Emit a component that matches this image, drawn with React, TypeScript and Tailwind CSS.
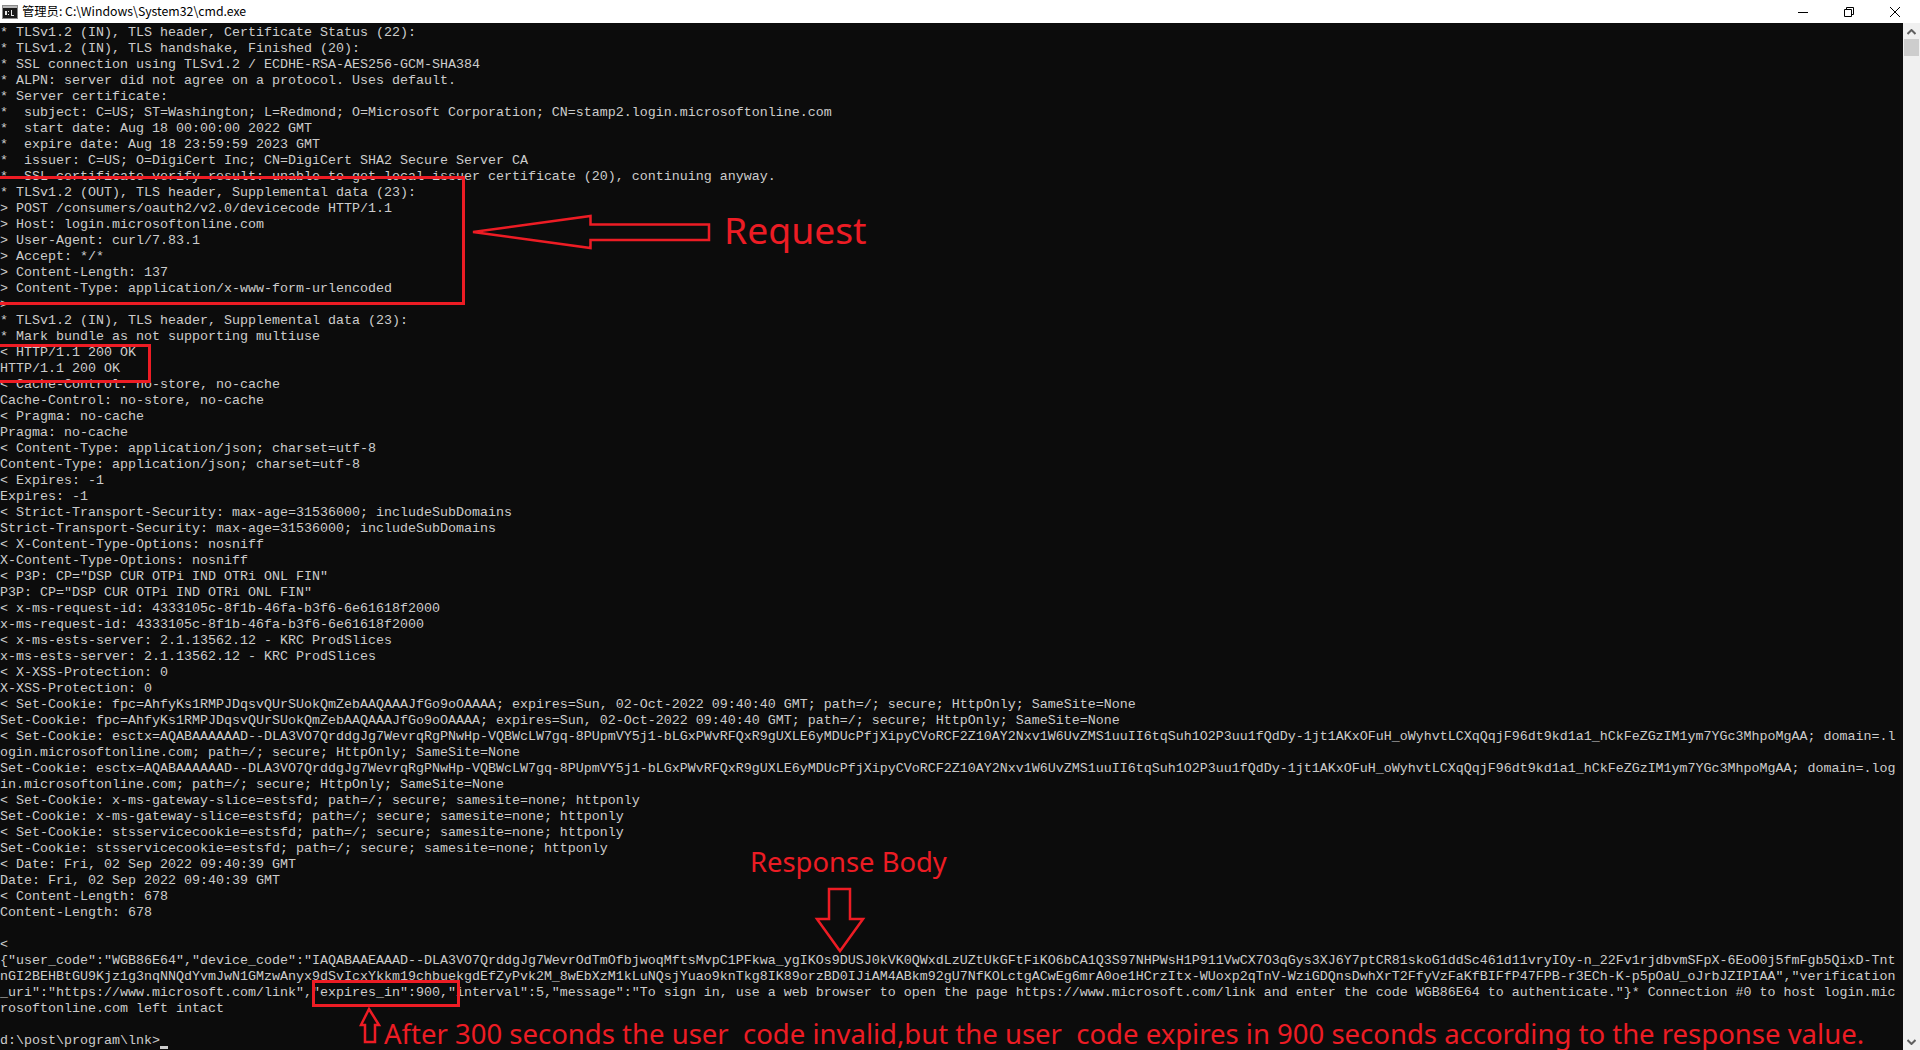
const lines: string[] = [
  '* TLSv1.2 (IN), TLS header, Certificate Status (22):',
  '* TLSv1.2 (IN), TLS handshake, Finished (20):',
  '* SSL connection using TLSv1.2 / ECDHE-RSA-AES256-GCM-SHA384',
  '* ALPN: server did not agree on a protocol. Uses default.',
  '* Server certificate:',
  '*  subject: C=US; ST=Washington; L=Redmond; O=Microsoft Corporation; CN=stamp2.login.microsoftonline.com',
  '*  start date: Aug 18 00:00:00 2022 GMT',
  '*  expire date: Aug 18 23:59:59 2023 GMT',
  '*  issuer: C=US; O=DigiCert Inc; CN=DigiCert SHA2 Secure Server CA',
  '*  SSL certificate verify result: unable to get local issuer certificate (20), continuing anyway.',
  '* TLSv1.2 (OUT), TLS header, Supplemental data (23):',
  '> POST /consumers/oauth2/v2.0/devicecode HTTP/1.1',
  '> Host: login.microsoftonline.com',
  '> User-Agent: curl/7.83.1',
  '> Accept: */*',
  '> Content-Length: 137',
  '> Content-Type: application/x-www-form-urlencoded',
  '>',
  '* TLSv1.2 (IN), TLS header, Supplemental data (23):',
  '* Mark bundle as not supporting multiuse',
  '< HTTP/1.1 200 OK',
  'HTTP/1.1 200 OK',
  '< Cache-Control: no-store, no-cache',
  'Cache-Control: no-store, no-cache',
  '< Pragma: no-cache',
  'Pragma: no-cache',
  '< Content-Type: application/json; charset=utf-8',
  'Content-Type: application/json; charset=utf-8',
  '< Expires: -1',
  'Expires: -1',
  '< Strict-Transport-Security: max-age=31536000; includeSubDomains',
  'Strict-Transport-Security: max-age=31536000; includeSubDomains',
  '< X-Content-Type-Options: nosniff',
  'X-Content-Type-Options: nosniff',
  '< P3P: CP="DSP CUR OTPi IND OTRi ONL FIN"',
  'P3P: CP="DSP CUR OTPi IND OTRi ONL FIN"',
  '< x-ms-request-id: 4333105c-8f1b-46fa-b3f6-6e61618f2000',
  'x-ms-request-id: 4333105c-8f1b-46fa-b3f6-6e61618f2000',
  '< x-ms-ests-server: 2.1.13562.12 - KRC ProdSlices',
  'x-ms-ests-server: 2.1.13562.12 - KRC ProdSlices',
  '< X-XSS-Protection: 0',
  'X-XSS-Protection: 0',
  '< Set-Cookie: fpc=AhfyKs1RMPJDqsvQUrSUokQmZebAAQAAAJfGo9oOAAAA; expires=Sun, 02-Oct-2022 09:40:40 GMT; path=/; secure; HttpOnly; SameSite=None',
  'Set-Cookie: fpc=AhfyKs1RMPJDqsvQUrSUokQmZebAAQAAAJfGo9oOAAAA; expires=Sun, 02-Oct-2022 09:40:40 GMT; path=/; secure; HttpOnly; SameSite=None',
  '< Set-Cookie: esctx=AQABAAAAAAD--DLA3VO7QrddgJg7WevrqRgPNwHp-VQBWcLW7gq-8PUpmVY5j1-bLGxPWvRFQxR9gUXLE6yMDUcPfjXipyCVoRCF2Z10AY2Nxv1W6UvZMS1uuII6tqSuh1O2P3uu1fQdDy-1jt1AKxOFuH_oWyhvtLCXqQqjF96dt9kd1a1_hCkFeZGzIM1ym7YGc3MhpoMgAA; domain=.l',
  'ogin.microsoftonline.com; path=/; secure; HttpOnly; SameSite=None',
  'Set-Cookie: esctx=AQABAAAAAAD--DLA3VO7QrddgJg7WevrqRgPNwHp-VQBWcLW7gq-8PUpmVY5j1-bLGxPWvRFQxR9gUXLE6yMDUcPfjXipyCVoRCF2Z10AY2Nxv1W6UvZMS1uuII6tqSuh1O2P3uu1fQdDy-1jt1AKxOFuH_oWyhvtLCXqQqjF96dt9kd1a1_hCkFeZGzIM1ym7YGc3MhpoMgAA; domain=.log',
  'in.microsoftonline.com; path=/; secure; HttpOnly; SameSite=None',
  '< Set-Cookie: x-ms-gateway-slice=estsfd; path=/; secure; samesite=none; httponly',
  'Set-Cookie: x-ms-gateway-slice=estsfd; path=/; secure; samesite=none; httponly',
  '< Set-Cookie: stsservicecookie=estsfd; path=/; secure; samesite=none; httponly',
  'Set-Cookie: stsservicecookie=estsfd; path=/; secure; samesite=none; httponly',
  '< Date: Fri, 02 Sep 2022 09:40:39 GMT',
  'Date: Fri, 02 Sep 2022 09:40:39 GMT',
  '< Content-Length: 678',
  'Content-Length: 678',
  '',
  '<',
  '{"user_code":"WGB86E64","device_code":"IAQABAAEAAAD--DLA3VO7QrddgJg7WevrOdTmOfbjwoqMftsMvpC1PFkwa_ygIKOs9DUSJ0kVK0QWxdLzUZtUkGFtFiKO6bCA1Q3S97NHPWsH1P911VwCX7O3qGys3XJ6Y7ptCR81skoG1ddSc461d11vryIOy-n_22Fv1rjdbvmSFpX-6EoO0j5fmFgb5QixD-Tnt',
  'nGI2BEHBtGU9Kjz1g3nqNNQdYvmJwN1GMzwAnyx9dSvIcxYkkm19chbuekgdEfZyPvk2M_8wEbXzM1kLuNQsjYuao9knTkg8IK89orzBD0IJiAM4ABkm92gU7NfKOLctgACwEg6mrA0oe1HCrzItx-WUoxp2qTnV-WziGDQnsDwhXrT2FfyVzFaKfBIFfP47FPB-r3ECh-K-p5pOaU_oJrbJZIPIAA","verification',
  '_uri":"https://www.microsoft.com/link","expires_in":900,"interval":5,"message":"To sign in, use a web browser to open the page https://www.microsoft.com/link and enter the code WGB86E64 to authenticate."}* Connection #0 to host login.mic',
  'rosoftonline.com left intact',
  '',
];

function CmdIcon() {
  return (
    <svg width="16" height="16" viewBox="0 0 16 16" className="shrink-0">
      <rect x="0.5" y="1.5" width="15" height="13" fill="#1a1a1a" stroke="#8a8a8a" />
      <rect x="1" y="2" width="14" height="2" fill="#b8b8b8" />
      <rect x="3" y="7" width="2" height="4" fill="#e8e8e8" />
      <rect x="6" y="7" width="1" height="1" fill="#e8e8e8" />
      <rect x="6" y="10" width="1" height="1" fill="#e8e8e8" />
      <rect x="9" y="6" width="1" height="5" fill="#e8e8e8" />
      <rect x="9" y="11" width="3" height="1" fill="#e8e8e8" />
    </svg>
  );
}

export default function App() {
  return (
    <div className="relative flex h-[1050px] w-[1920px] flex-col overflow-hidden bg-white">
      <div className="flex h-[23px] shrink-0 items-center bg-white">
        <div className="flex items-center gap-[4px] pl-[2px]">
          <CmdIcon />
          <span className="-mt-px font-['Noto_Sans_CJK_SC','Liberation_Sans',sans-serif] text-[12.3px] leading-[23px] text-black">
            管理员: C:\Windows\System32\cmd.exe
          </span>
        </div>
        <div className="ml-auto flex h-full items-center gap-[36px] pr-[20px]">
          <svg width="10" height="10" viewBox="0 0 10 10">
            <path d="M0 5.5H10" stroke="#000" strokeWidth="1" />
          </svg>
          <svg width="10" height="10" viewBox="0 0 10 10">
            <path d="M0.5 2.5H7.5V9.5H0.5ZM2.5 2.5V0.5H9.5V7.5H7.5" fill="none" stroke="#000" strokeWidth="1" />
          </svg>
          <svg width="10" height="10" viewBox="0 0 10 10">
            <path d="M0 0L10 10M10 0L0 10" stroke="#000" strokeWidth="1" />
          </svg>
        </div>
      </div>
      <div className="flex min-h-0 flex-1">
        <div className="min-w-0 flex-1 overflow-hidden bg-[#0c0c0c] pt-[2px] font-['Liberation_Mono',monospace] text-[13.33px] text-[#cccccc]">
          {lines.map((l, i) => (
            <div key={i} className="h-4 whitespace-pre leading-4">
              {l}
            </div>
          ))}
          <div className="flex h-4 leading-4">
            <span className="whitespace-pre">{'d:\\post\\program\\lnk>'}</span>
            <span className="mt-[13px] h-[3px] w-2 bg-[#cccccc]" />
          </div>
        </div>
        <div className="flex w-[17px] shrink-0 flex-col items-center bg-[#f0f0f0]">
          <svg width="9" height="6" viewBox="0 0 9 6" className="mt-[6px]">
            <path d="M0.5 5L4.5 1L8.5 5" fill="none" stroke="#606060" strokeWidth="2" />
          </svg>
          <div className="mt-[4px] h-[17px] w-[15px] bg-[#cdcdcd]" />
          <svg width="9" height="6" viewBox="0 0 9 6" className="mb-[5px] mt-auto">
            <path d="M0.5 1L4.5 5L8.5 1" fill="none" stroke="#606060" strokeWidth="2" />
          </svg>
        </div>
      </div>

      <div className="absolute left-0 top-[176px] h-[129px] w-[465px] border-[3px] border-l-0 border-[#ed1c24]" />
      <div className="absolute left-0 top-[344px] h-[39px] w-[151px] border-[3px] border-l-0 border-[#ed1c24]" />
      <div className="absolute left-[312px] top-[980px] h-[27px] w-[148px] border-[3px] border-[#ed1c24]" />

      <svg width="1920" height="1050" viewBox="0 0 1920 1050" fill="none" stroke="#ed1c24" strokeWidth="2.5" className="pointer-events-none absolute left-0 top-0">
        <path d="M473 232L590.5 216V224.5H709V240H590.5V248Z" />
        <path d="M829 889H850V919H863L840 951L817 919H829Z" />
        <path d="M369 1009L379 1025H375V1042H365V1025H361Z" />
      </svg>

      <span className="absolute left-[724px] top-[205px] font-['Noto_Sans',sans-serif] text-[37.3px] leading-[50px] text-[#ed1c24]">Request</span>
      <span className="absolute left-[750px] top-[842px] font-['Noto_Sans',sans-serif] text-[27.4px] leading-[40px] text-[#ed1c24]">Response Body</span>
      <span className="absolute left-[384px] top-[1016px] whitespace-pre font-['Noto_Sans',sans-serif] text-[27.5px] leading-[35px] text-[#ed1c24]">
        {'After 300 seconds the user  code invalid,but the user  code expires in 900 seconds according to the response value.'}
      </span>
    </div>
  );
}
